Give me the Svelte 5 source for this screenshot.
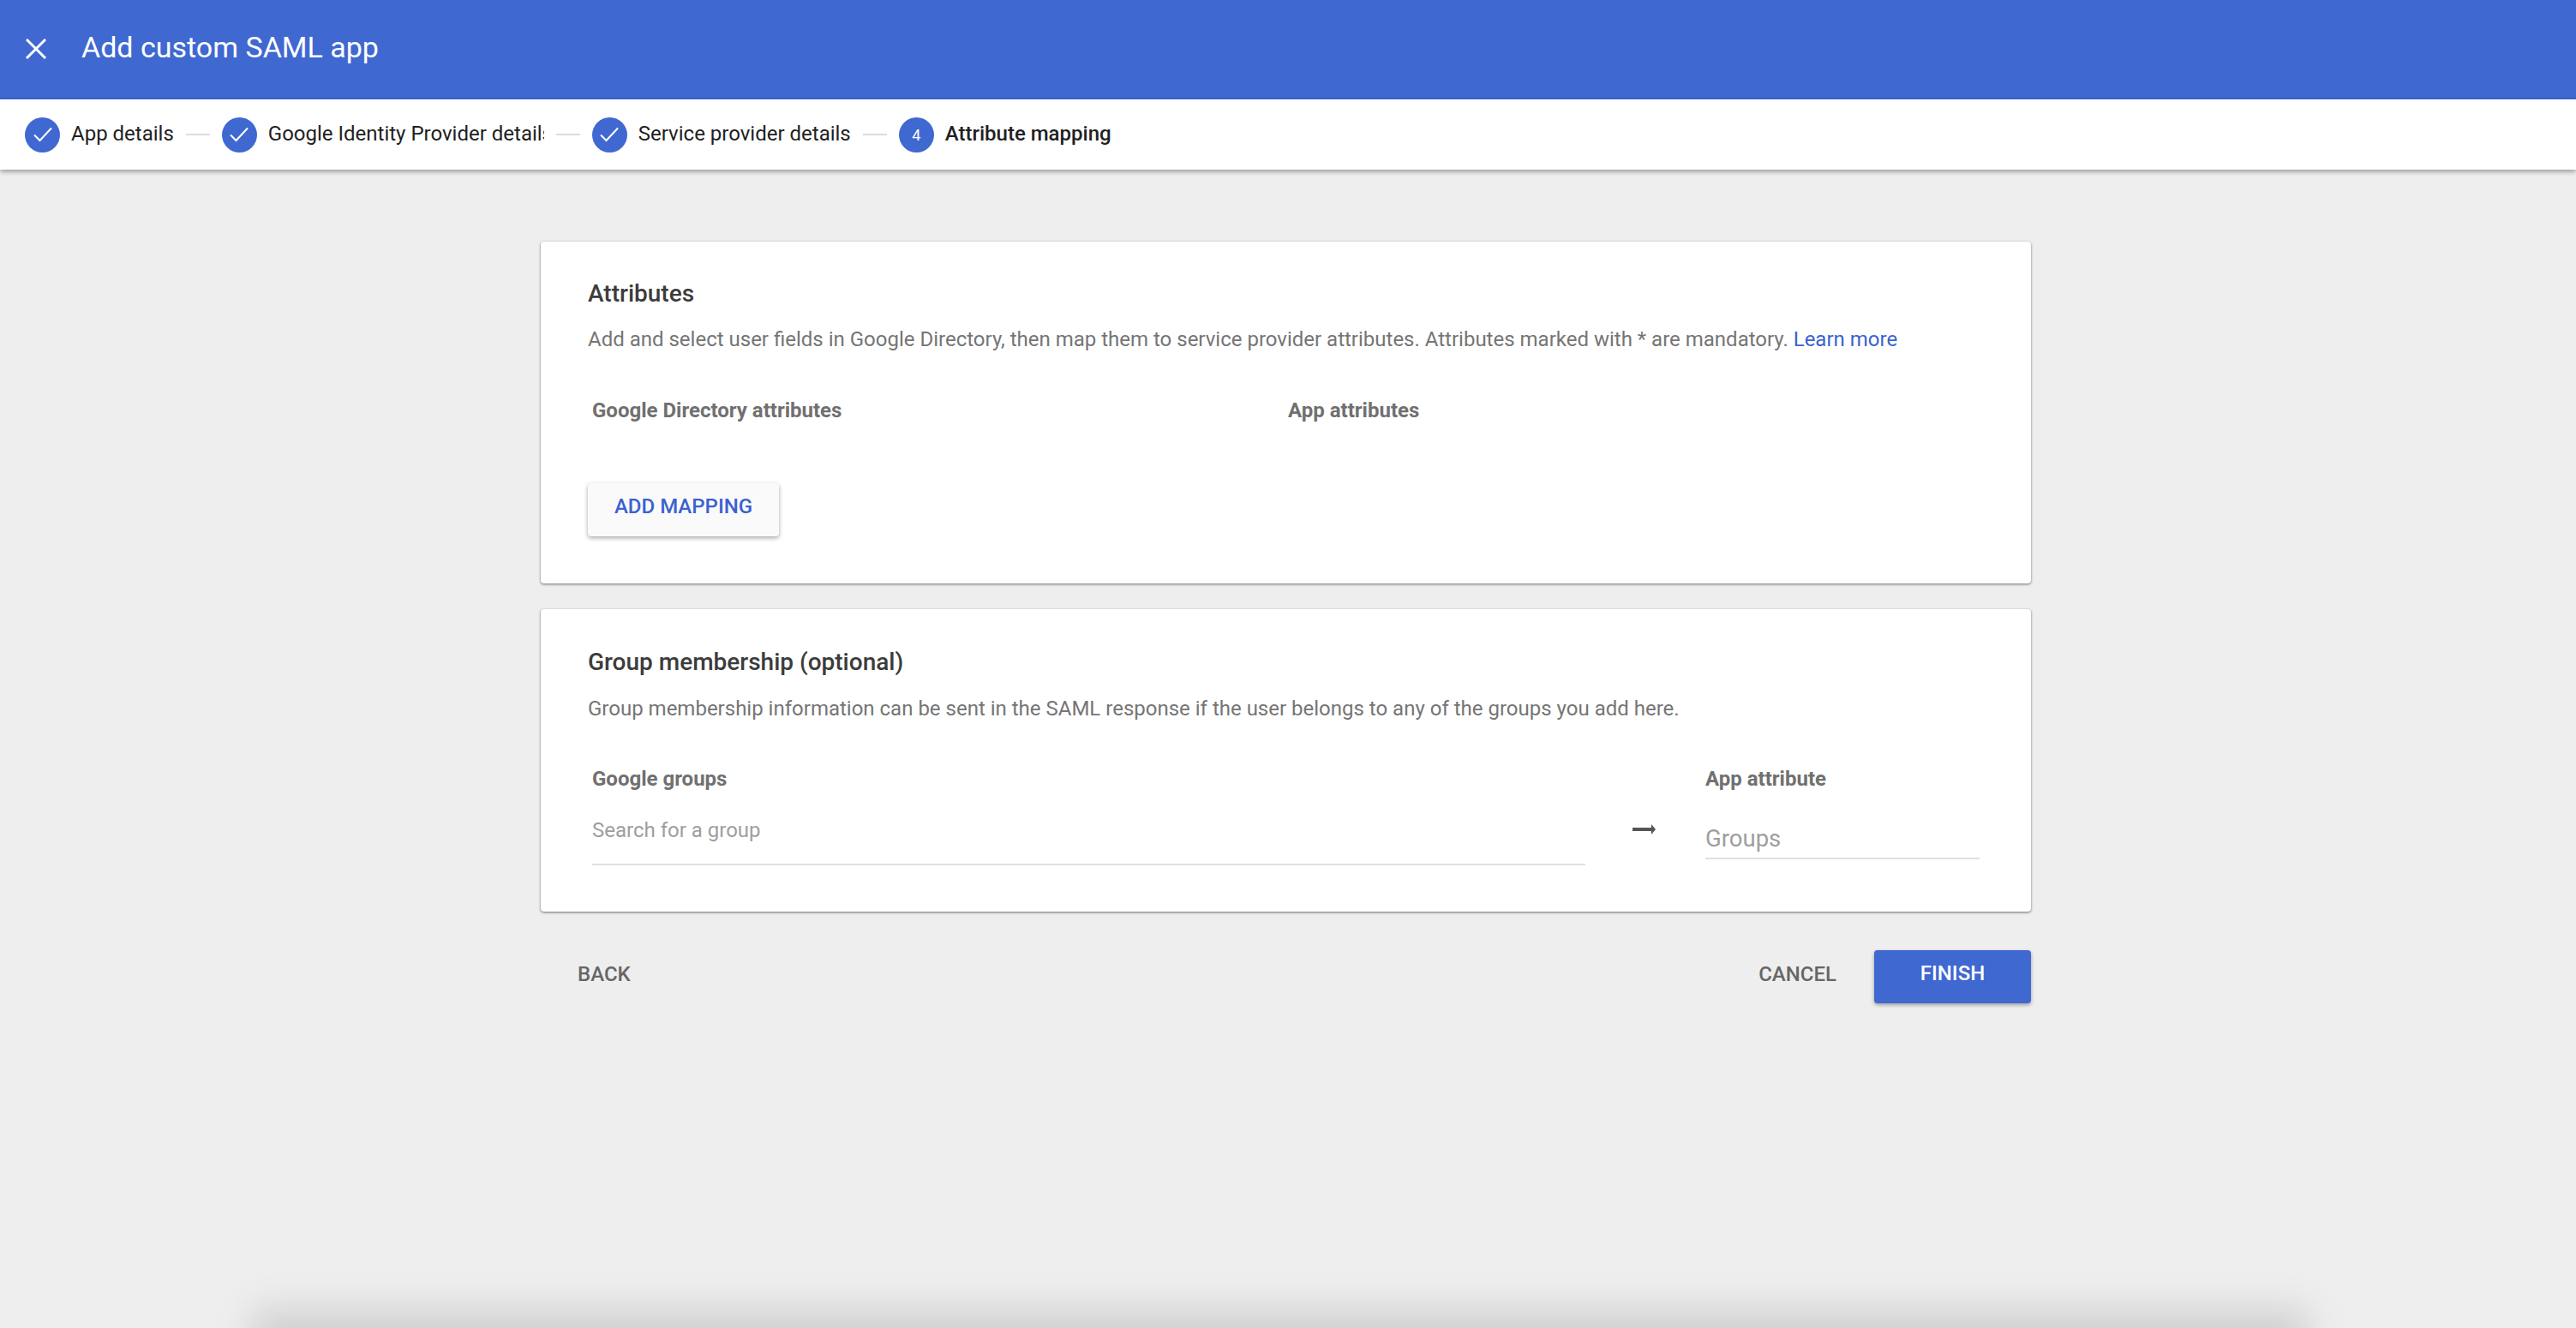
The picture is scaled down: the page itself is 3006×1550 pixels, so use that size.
<script lang="ts">
  const steps = [
    { label: 'App details', done: true, width: 0 },
    { label: 'Google Identity Provider details', done: true, width: 322 },
    { label: 'Service provider details', done: true, width: 0 },
    { label: 'Attribute mapping', done: false, width: 0 }
  ];
</script>

<div class="page">
  <header class="topbar">
    <button class="close" type="button" aria-label="Close">
      <svg width="26" height="26" viewBox="0 0 26 26"><path d="M2 2 L24 24 M24 2 L2 24" stroke="#fff" stroke-width="3" fill="none" /></svg>
    </button>
    <h1>Add custom SAML app</h1>
  </header>

  <nav class="stepper">
    {#each steps as step, i}
      {#if i > 0}<span class="connector"></span>{/if}
      <div class="step" class:active={!step.done}>
        <span class="badge">
          {#if step.done}
            <svg width="24" height="20" viewBox="0 0 24 20"><path d="M2 10.5 L8.5 17 L22 2.5" stroke="#fff" stroke-width="2" fill="none" /></svg>
          {:else}
            {i + 1}
          {/if}
        </span>
        <span class="step-label" style={step.width ? `width:${step.width}px` : ''}>{step.label}</span>
      </div>
    {/each}
  </nav>

  <main class="content">
    <section class="card attributes">
      <h2>Attributes</h2>
      <p class="desc">Add and select user fields in Google Directory, then map them to service provider attributes. Attributes marked with * are mandatory. <a href="#learn">Learn more</a></p>
      <div class="attr-head">
        <span class="col-label">Google Directory attributes</span>
        <span class="col-label">App attributes</span>
      </div>
      <button class="raised" type="button">ADD MAPPING</button>
    </section>

    <section class="card groups">
      <h2>Group membership (optional)</h2>
      <p class="desc">Group membership information can be sent in the SAML response if the user belongs to any of the groups you add here.</p>
      <div class="group-row">
        <div class="group-search">
          <span class="col-label">Google groups</span>
          <input class="search" type="text" placeholder="Search for a group" />
        </div>
        <svg class="arrow" width="28" height="14" viewBox="0 0 28 14"><path d="M0 5h22V1l5 6-5 6V9H0z" fill="#555" /></svg>
        <div class="group-attr">
          <span class="col-label">App attribute</span>
          <input class="attr" type="text" placeholder="Groups" />
        </div>
      </div>
    </section>

    <div class="actions">
      <button class="flat back" type="button">BACK</button>
      <button class="flat cancel" type="button">CANCEL</button>
      <button class="finish" type="button">FINISH</button>
    </div>
  </main>

  <div class="peek"></div>
</div>

<style>
  :global(body) { margin: 0; background: #eeeeee; }
  .page {
    position: relative;
    height: 1550px;
    overflow: hidden;
    font-family: Roboto, "Liberation Sans", sans-serif;
    background: #eeeeee;
  }
  button { font-family: inherit; cursor: pointer; }

  .topbar {
    height: 116px;
    background: #4068d1;
    display: flex;
    align-items: center;
    color: #fff;
  }
  .close { background: none; border: 0; padding: 0; margin-left: 29px; width: 26px; height: 26px; display: flex; margin-top: -3px; }
  h1 { margin: 0 0 0 40px; font-size: 34px; font-weight: 400; position: relative; top: -3px; }

  .stepper {
    height: 82px;
    background: #fff;
    display: flex;
    align-items: center;
    padding-left: 29px;
    gap: 14px;
    position: relative;
    box-shadow: 0 2px 6px rgba(0, 0, 0, 0.4);
  }
  .step { display: flex; align-items: center; gap: 13px; }
  .badge {
    width: 41px;
    height: 41px;
    border-radius: 50%;
    background: #4068d1;
    color: #fff;
    display: flex;
    align-items: center;
    justify-content: center;
    font-size: 18px;
  }
  .step-label {
    font-size: 24px;
    color: #212121;
    white-space: nowrap;
    overflow: hidden;
    position: relative;
    top: -1px;
  }
  .active .step-label { font-weight: 500; }
  .connector { width: 28px; height: 2px; background: #dcdcdc; }

  .content { width: 1739px; margin: 84px auto 0; position: relative; left: -2.5px; }
  .card {
    background: #fff;
    border-radius: 4px;
    box-shadow: 0 1px 3px rgba(0, 0, 0, 0.55);
    padding: 0 55px;
    box-sizing: border-box;
  }
  .attributes { height: 399px; padding-top: 44px; }
  .groups { height: 353px; margin-top: 30px; padding-top: 45px; }
  h2 { margin: 0; font-size: 28px; line-height: 34px; font-weight: 500; color: #3c3c3c; }
  .desc { margin: 19px 0 0; font-size: 24px; line-height: 34px; color: #757575; white-space: nowrap; }
  .groups .desc { margin-top: 20px; }
  .desc a { color: #3a62cf; text-decoration: none; }
  .col-label { font-size: 24px; font-weight: 700; color: #707070; display: block; line-height: 30px; }

  .attr-head { display: grid; grid-template-columns: 812px 1fr; padding-left: 5px; margin-top: 51px; }
  .raised {
    display: block;
    margin-top: 70px;
    width: 223px;
    height: 62px;
    background: #fafafa;
    border: 0;
    border-radius: 4px;
    padding: 0 0 8px;
    color: #3a62cf;
    font-size: 24px;
    font-weight: 500;
    box-shadow: 0 2px 5px rgba(0, 0, 0, 0.35);
  }

  .group-row { display: flex; align-items: flex-start; padding-left: 5px; margin-top: 50px; }
  .group-search { width: 1159px; }
  input {
    display: block;
    width: 100%;
    box-sizing: border-box;
    border: 0;
    border-bottom: 2px solid #e0e0e0;
    padding: 0;
    outline: none;
    font-family: inherit;
    background: none;
  }
  input::placeholder { color: #9e9e9e; opacity: 1; }
  .search { height: 71px; margin-top: 15px; font-size: 24px; padding-bottom: 10px; }
  .arrow { margin: 67px 57px 0 55px; flex: none; }
  .group-attr { width: 320px; }
  .attr { height: 50px; margin-top: 29px; font-size: 27.5px; padding-top: 3px; }

  .actions { display: flex; align-items: flex-start; margin-top: 45px; }
  .flat {
    background: none;
    border: 0;
    padding: 0;
    color: #666;
    font-size: 24px;
    font-weight: 500;
    line-height: 56px;
  }
  .back { margin-left: 43px; }
  .cancel { margin-left: auto; margin-right: 44px; }
  .finish {
    width: 183px;
    height: 62px;
    background: #4068d1;
    color: #fff;
    border: 0;
    border-radius: 4px;
    padding: 0 0 8px;
    font-size: 24px;
    font-weight: 500;
    box-shadow: 0 2px 4px rgba(0, 0, 0, 0.35);
  }

  .peek {
    position: absolute;
    left: 295px;
    right: 313px;
    top: 1528px;
    height: 120px;
    background: rgba(0, 0, 0, 0.12);
    filter: blur(21px);
  }
</style>
